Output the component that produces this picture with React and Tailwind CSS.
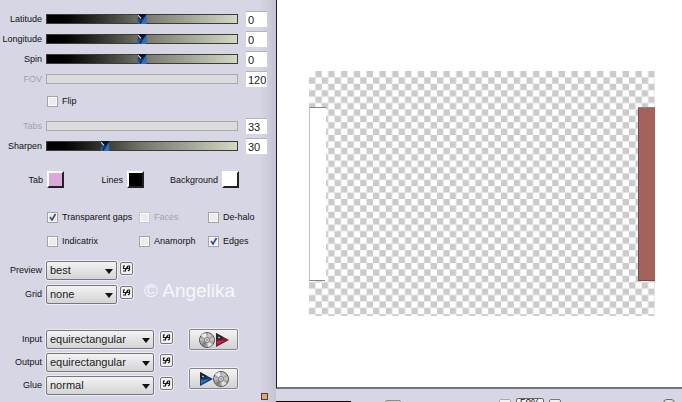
import { useState } from "react";

const labelText = "w-[42px] shrink-0 text-right whitespace-nowrap";

// Gradient track with a small blue marker on top of the range input
const SliderRow = ({ id, label, min, max, initial, disabled }) => {
  const [value, setValue] = useState(initial);
  const percent = ((value - min) / (max - min)) * 100;

  return (
    <div className="flex h-5 items-center gap-1">
      <label htmlFor={id} className={disabled ? `${labelText} text-[#a3a3ab]` : labelText}>
        {label}
      </label>
      <div className="relative flex flex-1 items-center">
        <input
          id={id}
          type="range"
          min={min}
          max={max}
          value={value}
          disabled={disabled}
          onChange={(e) => setValue(Number(e.target.value))}
          className="h-[10px] w-full appearance-none border border-[#3c3d38] bg-linear-to-r from-black via-[#75776b] to-[#d3d8c2] disabled:border-[#a9a9ab] disabled:bg-[#dcdcde] disabled:bg-none [&::-webkit-slider-thumb]:size-2 [&::-webkit-slider-thumb]:appearance-none [&::-webkit-slider-thumb]:opacity-0"
        />
        {!disabled && (
          <div className="pointer-events-none absolute inset-x-1 inset-y-0">
            <svg
              viewBox="0 0 9 9"
              className="absolute top-0 h-[10px] w-[9px] -translate-x-1/2"
              style={{ left: `${percent}%` }}
              preserveAspectRatio="none"
            >
              <rect width="9" height="9" fill="#1c3d70" />
              <path d="M0 0h9L4.500 5z" fill="#0c1524" />
              <path d="M9 1v8H3z" fill="#2f6fc4" />
              <path d="M0 5l3 1-1 3H0z" fill="#285da8" />
              <path d="M2 6.500h2.500L3 8.500z" fill="#10203a" />
              <path d="M.5 1l3 3" stroke="#dfe8f2" strokeWidth="1" />
            </svg>
          </div>
        )}
      </div>
      <input
        type="text"
        aria-label={`${label} value`}
        value={value}
        onChange={(e) => setValue(Number(e.target.value) || 0)}
        className="ml-1 h-4 w-[21px] border-t border-[#a9b4c4] bg-white pl-[2px] text-[11px] text-[#222] outline-none"
      />
    </div>
  );
};

const Check = ({ label, checked, disabled }) => (
  <label className={disabled ? "flex items-center gap-1 whitespace-nowrap text-[#a3a3ab]" : "flex items-center gap-1 whitespace-nowrap"}>
    <span className="relative size-[11px] shrink-0">
      <input
        type="checkbox"
        defaultChecked={checked}
        disabled={disabled}
        className="peer block size-[11px] appearance-none border border-[#a3a3a3] bg-[#ececee] shadow-[inset_0_0_0_1px_#fafafa] disabled:border-[#c9c9cd]"
      />
      <svg viewBox="0 0 11 11" className="pointer-events-none absolute inset-0 hidden peer-checked:block" fill="none">
        <path d="M3 5l2 3 3.500-6" stroke="#34499b" strokeWidth="1.600" />
      </svg>
    </span>
    {label}
  </label>
);

const Swatch = ({ label, color }) => (
  <div className="flex items-center gap-1">
    <span className="whitespace-nowrap">{label}</span>
    <button
      aria-label={`${label} color`}
      className={`size-[17px] border-2 border-t-white border-l-white border-r-[#222] border-b-[#222] ${color}`}
    />
  </div>
);

const SmallButton = ({ label }) => (
  <button
    aria-label={label}
    className="mt-px flex size-[13px] items-center justify-center rounded-[2px] border border-[#77777b] bg-[#f1f1f1] shadow-[0_0_0_1px_#ececf2]"
  >
    <svg viewBox="0 0 9 7" className="h-[7px] w-[9px]" fill="none" stroke="#1c1c1c" strokeWidth="1.200">
      <path d="M3 1H1.500v2.500h2V6H1M3.500 5L5.500 1.500M5.500 1v2.500h2V1H5.500M7.500 3v2L6 6" />
    </svg>
  </button>
);

const SelectRow = ({ id, label, options, width, row, gap }) => (
  <div className={`flex items-start gap-1 pt-[2px] ${row}`}>
    <label htmlFor={id} className={`${labelText} leading-[19px]`}>{label}</label>
    <div className={`relative ${width}`}>
      <select
        id={id}
        className="block h-[19px] w-full appearance-none rounded-[2px] border border-[#77777b] bg-linear-to-b from-[#f3f3f3] to-[#d4d4d6] pl-[3px] text-[11px] leading-[17px] text-[#222] shadow-[0_0_0_1px_#ececf2]"
      >
        {options.map((o) => (
          <option key={o}>{o}</option>
        ))}
      </select>
      <svg viewBox="0 0 8 5" className="pointer-events-none absolute top-2 right-1 h-[5px] w-2">
        <path d="M0 0h8L4 5z" fill="#111" />
      </svg>
    </div>
    <div className={gap}>
      <SmallButton label={`Step ${label}`} />
    </div>
  </div>
);

const Disc = () => (
  <svg viewBox="0 0 16 16" className="size-4">
    <circle cx="8" cy="8" r="7.500" fill="#a5a5a5" stroke="#555" />
    <path d="M8 8L2 3.500A7 7 0 0 1 7 1z" fill="#ececec" />
    <path d="M8 8l1-7a7 7 0 0 1 4 2.500z" fill="#c8bdd4" />
    <path d="M8 8l6.500-2.500a7 7 0 0 1 .3 4z" fill="#b7cdae" />
    <path d="M8 8l5.500 4.500A7 7 0 0 1 9 15z" fill="#e2dfe6" />
    <path d="M8 8l-2 6.500A7 7 0 0 1 2.500 12z" fill="#7d7d85" />
    <path d="M8 8L1 9V6z" fill="#cbb7c0" />
    <circle cx="8" cy="8" r="2.500" fill="#ddd" stroke="#777" />
    <circle cx="8" cy="8" r="1" fill="#999" />
  </svg>
);

const Arrow = ({ dark, light }) => (
  <svg viewBox="0 0 14 14" className="size-[14px]">
    <path d="M1 0l13 7-13 7z" fill={dark} />
    <path d="M2 8l9-1-9 5z" fill={light} />
    <path d="M1 0l7 4-2 3-5-1z" fill="#25252d" />
    <path d="M3 4l2 1" stroke="#e5e5ee" />
  </svg>
);

const ActionButton = ({ label, children }) => (
  <button
    aria-label={label}
    className="flex h-[21px] w-[49px] items-center justify-center rounded-[2px] border border-[#85858a] bg-linear-to-b from-[#f4f4f4] to-[#d2d2d4] shadow-[0_0_0_1px_#ececf2]"
  >
    {children}
  </button>
);

const Controls = () => (
  <aside className="relative w-[276px] shrink-0 bg-linear-to-r from-[#d6d6e4] from-94% to-[#c3c3d2] pt-[9px]">
    <div className="pr-[9px]">
      <SliderRow id="latitude" label="Latitude" min={-180} max={180} initial={0} />
      <SliderRow id="longitude" label="Longitude" min={-180} max={180} initial={0} />
      <SliderRow id="spin" label="Spin" min={-180} max={180} initial={0} />
      <SliderRow id="fov" label="FOV" min={1} max={180} initial={120} disabled />
      <div className="flex h-6 pl-[47px]">
        <Check label="Flip" />
      </div>
      <div className="mt-[3px]">
        <SliderRow id="tabs" label="Tabs" min={0} max={100} initial={33} disabled />
        <SliderRow id="sharpen" label="Sharpen" min={0} max={100} initial={30} />
      </div>
    </div>

    <div className="mt-[15px] grid grid-cols-[64px_80px_95px] justify-items-end">
      <Swatch label="Tab" color="bg-[#d9a9dc]" />
      <Swatch label="Lines" color="bg-black" />
      <Swatch label="Background" color="bg-white" />
    </div>

    <div className="mt-[17px] grid auto-rows-[24px] grid-cols-[92px_69px_1fr] pl-[47px]">
      <Check label="Transparent gaps" checked />
      <Check label="Faces" disabled />
      <Check label="De-halo" />
      <Check label="Indicatrix" />
      <Check label="Anamorph" />
      <Check label="Edges" checked />
    </div>

    <div className="relative mt-[6px]">
      <SelectRow id="preview" label="Preview" options={["best", "fast"]} width="w-[71px]" row="h-6" gap="-ml-px" />
      <SelectRow id="grid" label="Grid" options={["none", "fine"]} width="w-[71px]" row="h-6" gap="-ml-px" />
      <p className="pointer-events-none absolute top-5 left-36 text-[19px] leading-6 text-[#f6f6fb]">© Angelika</p>
    </div>

    <div className="mt-[21px] flex">
      <div>
        <SelectRow id="input" label="Input" options={["equirectangular", "normal"]} width="w-[108px]" row="h-[23px]" gap="ml-[2px]" />
        <SelectRow id="output" label="Output" options={["equirectangular", "normal"]} width="w-[108px]" row="h-[23px]" gap="ml-[2px]" />
        <SelectRow id="glue" label="Glue" options={["normal", "multiply"]} width="w-[108px]" row="h-[23px]" gap="ml-[2px]" />
      </div>
      <div className="ml-4 flex flex-col gap-[18px] pt-px">
        <ActionButton label="Load settings">
          <Disc />
          <Arrow dark="#7c1330" light="#c22a4c" />
        </ActionButton>
        <ActionButton label="Save settings">
          <Arrow dark="#153a78" light="#2f6fc0" />
          <Disc />
        </ActionButton>
      </div>
    </div>

    <span className="absolute right-2 bottom-[2px] size-[7px] border border-[#4c4038] bg-[#e5a468]" />
  </aside>
);

const Preview = () => (
  <svg viewBox="0 0 346 245" className="h-[245px] w-[346px]">
    <defs>
      <pattern id="checker" width="12.8" height="12.8" patternUnits="userSpaceOnUse">
        <rect width="12.8" height="12.8" fill="#fff" />
        <rect x="6.4" width="6.4" height="6.4" fill="#cbcbcb" />
        <rect y="6.4" width="6.4" height="6.4" fill="#cbcbcb" />
      </pattern>
    </defs>
    <rect width="346" height="245" fill="url(#checker)" />
    <rect y="36" width="17" height="174" fill="#fff" />
    <path d="M17 36.500H.5v173H16" fill="none" stroke="#8b8589" />
    <path d="M.5 37v172" stroke="#c4c0c2" />
    <rect x="329" y="36" width="17" height="174" fill="#a3625b" />
    <path d="M329 36.500h17" stroke="#8d8085" />
    <path d="M329 209.500h17M329.500 37v172" stroke="#7c4a47" />
  </svg>
);

const StatusBar = () => (
  <footer className="flex h-[13px] items-start overflow-hidden bg-[#d6d6e4] pr-[7px]">
    <span className="mt-3 h-3 w-[75px] bg-[#0a0a0a]" />
    <button aria-label="Fit" className="mt-[11px] ml-[34px] h-3 w-4 rounded-[2px] border border-[#8a8a8e] bg-[#d4d4d6]" />
    <button aria-label="Zoom out" className="mt-[10px] ml-[98px] h-3 w-3 rounded-[2px] border border-[#a9a9ab] bg-[#f1f1f1]" />
    <button className="mt-[9px] ml-[5px] flex h-4 w-7 items-start justify-center rounded-[2px] border border-[#66666a] bg-[#f1f1f1] text-[10px] leading-[10px]">
      50%
    </button>
    <button aria-label="Zoom in" className="mt-[10px] ml-[5px] h-3 w-3 rounded-[2px] border border-[#77777b] bg-[#f1f1f1]" />
    <button aria-label="Help" className="mt-[10px] ml-auto h-3 w-3 rounded-[4px] border border-[#66666a] bg-[#e4e4e6]" />
  </footer>
);

const App = () => {
  return (
    <div className="flex h-screen overflow-hidden bg-[#d6d6e4] font-['Liberation_Sans',Arial,sans-serif] text-[9px] leading-3 text-[#111]">
      <Controls />
      <div className="flex min-w-0 flex-1 flex-col">
        <main className="flex min-h-0 flex-1 items-center justify-center border-b-2 border-l border-b-[#74747c] border-l-[#1b222c] bg-white pl-1">
          <Preview />
        </main>
        <StatusBar />
      </div>
    </div>
  );
};

export default App;
